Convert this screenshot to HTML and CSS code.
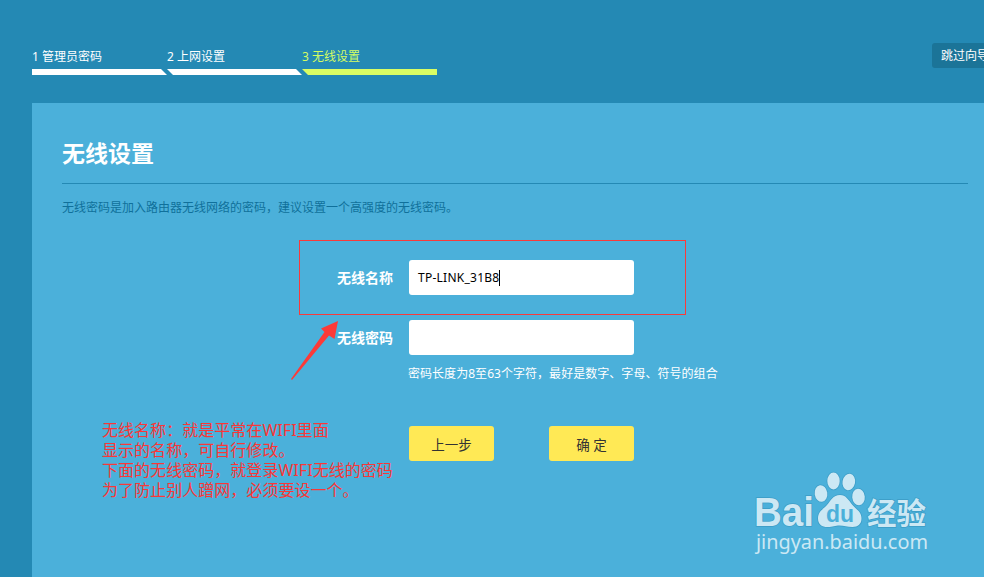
FILE: index.html
```html
<!DOCTYPE html>
<html lang="zh-CN">
<head>
    <meta charset="UTF-8">
    <meta name="viewport" content="width=device-width, initial-scale=1.0">
    <title>无线设置</title>
    <link rel="stylesheet" href="styles.css">
</head>
<body>
    <header class="header">
        <ol class="steps">
            <li class="step first"><span>1 管理员密码</span></li>
            <li class="step"><span>2 上网设置</span></li>
            <li class="step last active"><span>3 无线设置</span></li>
        </ol>
        <button class="skip" type="button">跳过向导</button>
    </header>

    <main class="panel">
        <h1>无线设置</h1>
        <p class="desc">无线密码是加入路由器无线网络的密码，建议设置一个高强度的无线密码。</p>
        <form class="form">
            <div class="field">
                <label>无线名称</label>
                <div class="input"><span class="value">TP-LINK_31B8</span><span class="caret"></span></div>
            </div>
            <div class="field">
                <label>无线密码</label>
                <div class="input"></div>
            </div>
            <p class="hint">密码长度为8至63个字符，最好是数字、字母、符号的组合</p>
            <div class="buttons">
                <button class="btn" type="button">上一步</button>
                <button class="btn" type="button">确 定</button>
            </div>
        </form>
    </main>

    <div class="mark-box"></div>
    <svg class="mark-arrow" width="50" height="62" viewBox="0 0 50 62">
        <path d="M48 1 L44.5 19 L39 15.5 L2 60 L1 59 L34.5 12 L31 8.5 Z"/>
    </svg>
    <div class="mark-text">
        无线名称：就是平常在WIFI里面<br>
        显示的名称，可自行修改。<br>
        下面的无线密码，就登录WIFI无线的密码<br>
        为了防止别人蹭网，必须要设一个。
    </div>

    <svg class="watermark" width="190" height="90" viewBox="0 0 190 90">
        <g class="watermark-shape">
            <text class="logo-text" x="2" y="61" textLength="60" lengthAdjust="spacingAndGlyphs">Bai</text>
            <ellipse cx="69" cy="28.500" rx="6.3" ry="8.3" transform="rotate(-8 69 28.500)"/>
            <ellipse cx="81.500" cy="16" rx="6.2" ry="8.5"/>
            <ellipse cx="96.800" cy="17" rx="6.3" ry="8.3" transform="rotate(10 96.800 17)"/>
            <ellipse cx="106.500" cy="32" rx="6.3" ry="8.3" transform="rotate(-5 106.500 32)"/>
            <path d="M88 30 C81 30 78.500 36 75 40 C70 45 66 47 66 53.500 C66 59.500 70 62 75.500 62 C81 62 83 60.500 87.500 60.500 C92 60.500 95 62 100.500 62 C106 62 109.500 59 109.500 53.500 C109.500 47 105 45 100.500 40 C96.500 35 94 30 88 30 Z"/>
            <text class="logo-cjk" x="115" y="58.500" textLength="59" lengthAdjust="spacingAndGlyphs">经验</text>
        </g>
        <text class="logo-du" x="74" y="57" textLength="28" lengthAdjust="spacingAndGlyphs">du</text>
        <text class="logo-url" x="4" y="84" textLength="172" lengthAdjust="spacingAndGlyphs">jingyan.baidu.com</text>
    </svg>
</body>
</html>
```

FILE: styles.css
```css
* {
    box-sizing: border-box;
}
body {
    margin: 0;
    height: 577px;
    overflow: hidden;
    position: relative;
    display: flex;
    flex-direction: column;
    background-color: #2489b4;
    color: #fff;
    font-family: "Noto Sans", "Noto Sans CJK SC", sans-serif;
    font-size: 12px;
}
.header {
    height: 103px;
    flex-shrink: 0;
    padding: 43px 0 0 32px;
    display: flex;
    justify-content: space-between;
    align-items: flex-start;
}
.steps {
    display: flex;
    margin: 0;
    padding: 0;
    list-style: none;
}
.step {
    width: 135px;
    white-space: nowrap;
}
.step span {
    display: block;
    height: 26px;
    line-height: 28px;
}
.step::after {
    content: "";
    display: block;
    width: 135px;
    height: 6px;
    background-color: #fff;
    clip-path: polygon(0 0, 129px 0, 135px 100%, 6px 100%);
}
.step.first::after {
    clip-path: polygon(0 0, 129px 0, 135px 100%, 0 100%);
}
.step.last::after {
    clip-path: polygon(0 0, 100% 0, 100% 100%, 6px 100%);
}
.step.active {
    color: #d4fc63;
}
.step.active::after {
    background-color: #d9fd64;
}
.skip {
    width: 66px;
    height: 25px;
    margin-right: -14px;
    padding: 0 0 0 9px;
    flex-shrink: 0;
    border: none;
    border-radius: 3px;
    background-color: #1b7498;
    color: #fff;
    font: inherit;
    line-height: 25px;
    text-align: left;
    white-space: nowrap;
}
.panel {
    flex: 1;
    margin-left: 32px;
    padding: 29px 16px 0 30px;
    background-color: #4bb0da;
}
h1 {
    height: 52px;
    margin: 0;
    border-bottom: 1px solid #2489b4;
    font-size: 23px;
    line-height: 42px;
}
.desc {
    margin: 14px 0 0;
    line-height: 20px;
    color: #10709b;
}
.form {
    margin-top: 42px;
    padding-left: 275px;
}
.field {
    display: flex;
    align-items: center;
    gap: 16px;
    height: 35px;
    margin-bottom: 25px;
}
.field label {
    width: 56px;
    padding-bottom: 2px;
    font-size: 14px;
    font-weight: bold;
    white-space: nowrap;
}
.input {
    display: flex;
    align-items: center;
    width: 225px;
    height: 35px;
    padding-left: 9px;
    border-radius: 3px;
    background-color: #fff;
    color: #000;
}
.value {
    font-size: 12px;
    line-height: 20px;
    padding-top: 1px;
    letter-spacing: 0.25px;
}
.caret {
    width: 1px;
    height: 16px;
    background-color: #000;
}
.hint {
    margin: -16px 0 0 71px;
    line-height: 20px;
    letter-spacing: 0.04px;
    white-space: nowrap;
}
.buttons {
    display: flex;
    gap: 55px;
    margin: 42px 0 0 72px;
}
.btn {
    width: 85px;
    height: 35px;
    padding: 0;
    border: none;
    border-radius: 3px;
    background-color: #ffe955;
    color: #333;
    font: inherit;
    font-size: 13.5px;
}
.mark-box {
    position: absolute;
    left: 299px;
    top: 240px;
    width: 387px;
    height: 75px;
    border: 1px solid #f93a3a;
}
.mark-arrow {
    position: absolute;
    left: 290px;
    top: 320px;
    fill: #fc3a38;
}
.mark-text {
    position: absolute;
    left: 102px;
    top: 420px;
    font-size: 16px;
    line-height: 20px;
    letter-spacing: 0.04px;
    color: #f93737;
    white-space: nowrap;
}
.watermark {
    position: absolute;
    left: 752px;
    top: 465px;
    fill: #cce8f4;
}
.watermark-shape {
    stroke: #3c9dc7;
    stroke-width: 1.5px;
    paint-order: stroke;
}
.logo-text {
    font-family: "Liberation Sans", sans-serif;
    font-size: 40px;
    font-weight: bold;
}
.logo-cjk {
    font-family: "Noto Sans CJK SC", sans-serif;
    font-size: 30px;
    font-weight: bold;
}
.logo-du {
    fill: #4bb0da;
    font-family: "Liberation Sans", sans-serif;
    font-size: 24px;
    font-weight: bold;
}
.logo-url {
    font-family: "Noto Sans", sans-serif;
    font-size: 20px;
}
```
